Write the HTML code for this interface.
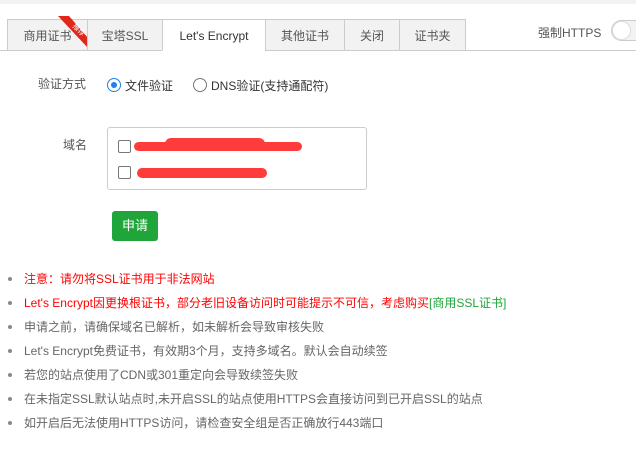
<!DOCTYPE html>
<html><head><meta charset="utf-8"><style>
*{margin:0;padding:0;box-sizing:border-box}
body{width:636px;height:452px;background:#fff;font-family:"Liberation Sans","Noto Sans CJK SC",sans-serif;font-size:12px;color:#555;position:relative;overflow:hidden}
.top{position:absolute;left:0;top:0;width:636px;height:4px;background:#f2f2f2}
.bar{position:absolute;left:0;top:50px;width:636px;height:1px;background:#ccc}
.tab{position:absolute;top:19px;height:32px;border:1px solid #ccc;background:#f2f2f2;line-height:32px;text-align:center;color:#555}
.tab.act{background:#fff;border-bottom-color:#fff;color:#333}
.abs{position:absolute;white-space:nowrap}
.radio{position:absolute;width:14px;height:14px;border-radius:50%;border:1px solid #777;background:#fff}
.cb{position:absolute;width:13px;height:13px;border:1px solid #777;border-radius:2px;background:#fff}
li{position:absolute;left:8px;list-style:none;white-space:nowrap;color:#666}
li:before{content:"";position:absolute;left:0;top:7px;width:4px;height:4px;border-radius:50%;background:#888}
li span.t{position:absolute;left:16px;top:0}
</style></head><body>
<div class="top"></div>
<div class="bar"></div>
<div class="tab" style="left:7px;width:81px">商用证书</div>
<svg class="abs" style="left:58px;top:16px" width="30" height="32"><polygon points="0,0 11,0 30,22 30,32" fill="#e0271a"/><text x="14" y="13" font-size="7" fill="#fff" transform="rotate(45 17 12)" font-family="Noto Sans CJK SC">推荐</text></svg>
<div class="tab" style="left:87px;width:76px">宝塔SSL</div>
<div class="tab act" style="left:162px;width:104px">Let's Encrypt</div>
<div class="tab" style="left:265px;width:80px">其他证书</div>
<div class="tab" style="left:344px;width:56px">关闭</div>
<div class="tab" style="left:399px;width:67px">证书夹</div>
<div class="abs" style="left:538px;top:24px;color:#555">强制HTTPS</div>
<div class="abs" style="left:611px;top:20px;width:40px;height:21px;border-radius:11px;border:1px solid #ccc;background:#f2f2f2"></div>
<div class="abs" style="left:612px;top:21px;width:19px;height:19px;border-radius:50%;background:#fff;border:1px solid #ddd"></div>

<div class="abs" style="left:38px;top:75px">验证方式</div>
<div class="radio" style="left:107px;top:78px;border-color:#1e7ff0"></div>
<div class="abs" style="left:111px;top:82px;width:6px;height:6px;border-radius:50%;background:#1e7ff0"></div>
<div class="abs" style="left:125px;top:77px;color:#333">文件验证</div>
<div class="radio" style="left:193px;top:78px"></div>
<div class="abs" style="left:211px;top:77px;color:#333">DNS验证(支持通配符)</div>

<div class="abs" style="left:63px;top:136px">域名</div>
<div class="abs" style="left:107px;top:127px;width:260px;height:63px;border:1px solid #ccc;border-radius:3px"></div>
<div class="cb" style="left:118px;top:140px"></div>
<div class="abs" style="left:134px;top:142px;width:168px;height:9px;border-radius:5px;background:#ff3c3c"></div>
<div class="abs" style="left:165px;top:138px;width:100px;height:12px;border-radius:6px;background:#ff3c3c"></div>
<div class="cb" style="left:118px;top:166px"></div>
<div class="abs" style="left:137px;top:168px;width:130px;height:10px;border-radius:5px;background:#ff3c3c"></div>
<div class="abs" style="left:112px;top:211px;width:46px;height:30px;border-radius:3px;background:#20a53a;color:#fff;line-height:30px;text-align:center;font-size:13px">申请</div>

<ul>
<li style="top:270px"><span class="t" style="color:#f00">注意：请勿将SSL证书用于非法网站</span></li>
<li style="top:294px"><span class="t" style="color:#f00">Let's Encrypt因更换根证书，部分老旧设备访问时可能提示不可信，考虑购买<span style="color:#20a53a">[商用SSL证书]</span></span></li>
<li style="top:318px"><span class="t">申请之前，请确保域名已解析，如未解析会导致审核失败</span></li>
<li style="top:342px"><span class="t">Let's Encrypt免费证书，有效期3个月，支持多域名。默认会自动续签</span></li>
<li style="top:366px"><span class="t">若您的站点使用了CDN或301重定向会导致续签失败</span></li>
<li style="top:390px"><span class="t">在未指定SSL默认站点时,未开启SSL的站点使用HTTPS会直接访问到已开启SSL的站点</span></li>
<li style="top:414px"><span class="t">如开启后无法使用HTTPS访问，请检查安全组是否正确放行443端口</span></li>
</ul>
</body></html>
